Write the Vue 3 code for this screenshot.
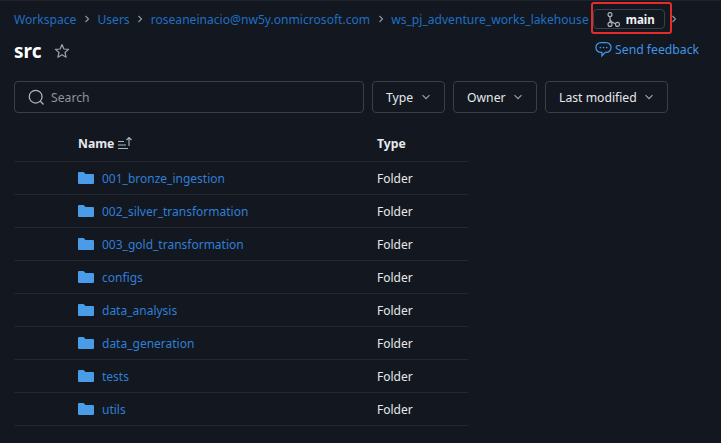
<script setup>
const folders = [
  "001_bronze_ingestion",
  "002_silver_transformation",
  "003_gold_transformation",
  "configs",
  "data_analysis",
  "data_generation",
  "tests",
  "utils",
];
const crumbs = ["Workspace", "Users", "roseaneinacio@nw5y.onmicrosoft.com", "ws_pj_adventure_works_lakehouse"];
const filters = [
  { label: "Type", width: "73px" },
  { label: "Owner", width: "84px" },
  { label: "Last modified", width: "123px" },
];
</script>

<template>
  <main class="page">
    <!-- breadcrumb row -->
    <nav class="crumbs">
      <template v-for="c in crumbs" :key="c">
        <a class="crumb">{{ c }}</a>
        <svg v-if="c !== crumbs[3]" class="sep" viewBox="0 0 8 10"><path d="M2.5 2 5.5 5 2.5 8" /></svg>
      </template>
      <div class="branch">
        <svg class="branch-icon" viewBox="0 0 13 15">
          <circle cx="3" cy="2.6" r="2" />
          <circle cx="3" cy="12.4" r="2" />
          <circle cx="10.5" cy="12.4" r="2" />
          <path d="M3 4.6v5.8M3 6c0 2.5 1.5 4.5 5.5 5.6" />
        </svg>
        <span>main</span>
        <div class="highlight"></div>
      </div>
      <svg class="sep last" viewBox="0 0 8 10"><path d="M2.5 2 5.5 5 2.5 8" /></svg>
    </nav>

    <!-- title row -->
    <header class="title-row">
      <h1>src</h1>
      <svg class="star" viewBox="0 0 16 16"><path d="M8 1.6 9.9 6l4.7.4-3.6 3.1 1.1 4.7L8 11.7l-4.1 2.5L5 9.5 1.4 6.4 6.1 6Z" /></svg>
      <a class="feedback">
        <svg viewBox="0 0 16 16"><path d="M5.5 1.5h5a4.6 4.6 0 0 1 0 9.2H9.6L6.5 14v-3.3h-1a4.6 4.6 0 0 1 0-9.2Z" /><g class="dots"><circle cx="5" cy="6.1" r=".8" /><circle cx="8" cy="6.1" r=".8" /><circle cx="11" cy="6.1" r=".8" /></g></svg>
        Send feedback
      </a>
    </header>

    <!-- search and filters -->
    <div class="toolbar">
      <label class="search">
        <svg viewBox="0 0 16 16"><circle cx="7.2" cy="7.2" r="6" /><path d="m11.6 11.6 3 3" /></svg>
        <span>Search</span>
      </label>
      <button v-for="f in filters" :key="f.label" class="filter" :style="{ width: f.width }">
        {{ f.label }}
        <svg viewBox="0 0 10 10"><path d="M1.5 3.2 5 6.7 8.5 3.2" /></svg>
      </button>
    </div>

    <table class="files">
      <thead>
        <tr>
          <th class="name-col">
            <span class="name-head">Name
              <svg viewBox="0 0 14 12"><path d="M0 4.5h6M0 8h8M0 11.5h10M11 9V.5M8.5 3 11 .5 13.5 3" /></svg>
            </span>
          </th>
          <th>Type</th>
        </tr>
      </thead>
      <tbody>
        <tr v-for="f in folders" :key="f">
          <td class="name-col">
            <div class="name-cell">
              <svg class="folder" viewBox="0 0 16 12"><path d="M0 1a1 1 0 0 1 1-1h4.6l2 2H15a1 1 0 0 1 1 1v8a1 1 0 0 1-1 1H1a1 1 0 0 1-1-1Z" /></svg>
              <a>{{ f }}</a>
            </div>
          </td>
          <td class="type">Folder</td>
        </tr>
      </tbody>
    </table>
  </main>
</template>

<style>
body { background: #13171f; }
</style>

<style scoped>
.page {
  width: 721px;
  height: 443px;
  box-sizing: border-box;
  overflow: hidden;
  padding: 1px 22px 0 14px;
  border-top: 1px solid #1f242c;
  background: #13171f;
  color: #e6e9ed;
  font-family: "Noto Sans", "Open Sans", sans-serif;
  font-size: 12.2px;
}

.crumbs {
  display: flex;
  align-items: center;
  height: 34px;
  white-space: nowrap;
}
.crumb { color: #1f6fc4; font-size: 12.1px; }
.sep { width: 8px; height: 10px; margin: 0 6.5px; flex: none; }
.sep path { fill: none; stroke: #8b949e; stroke-width: 1.2; }
.sep.last { margin: 0 0 0 5px; }

.branch {
  position: relative;
  display: flex;
  align-items: center;
  gap: 6px;
  width: 72px;
  height: 20px;
  margin-left: 4px;
  box-sizing: border-box;
  padding-left: 13px;
  border: 1px solid #3a4048;
  border-radius: 4px;
  color: #f2f4f6;
  font-size: 11.5px;
  font-weight: 700;
}
.branch-icon { width: 13px; height: 15px; flex: none; }
.branch-icon circle, .branch-icon path { fill: none; stroke: #aeb6bf; stroke-width: 1.1; }
.highlight {
  position: absolute;
  left: -3px;
  right: -8px;
  top: -8px;
  bottom: -6px;
  border: 2px solid #e52b2b;
  border-radius: 3px;
}

.title-row {
  display: flex;
  align-items: center;
  height: 30px;
}
h1 {
  margin: 0;
  font-size: 19px;
  font-weight: 700;
  color: #fff;
}
.star { width: 16px; height: 16px; margin-left: 13px; }
.star path { fill: none; stroke: #9aa3ad; stroke-width: 1.2; stroke-linejoin: round; }
.feedback {
  display: flex;
  align-items: center;
  gap: 3px;
  margin-left: auto;
  margin-top: -4px;
  color: #3f95e6;
  font-size: 12.2px;
}
.feedback svg { width: 17px; height: 17px; }
.feedback svg > path { fill: none; stroke: #3f95e6; stroke-width: 1.2; }
.dots circle { fill: #3f95e6; }

.toolbar {
  display: flex;
  gap: 8px;
  margin-top: 15px;
}
.search {
  display: flex;
  align-items: center;
  gap: 6px;
  width: 350px;
  height: 32px;
  box-sizing: border-box;
  padding-left: 13px;
  border: 1px solid #3a4048;
  border-radius: 4px;
  color: #8b949e;
  font-size: 12.2px;
}
.search svg { width: 17px; height: 17px; }
.search circle, .search path { fill: none; stroke: #aeb6bf; stroke-width: 1.2; }
.filter {
  display: flex;
  align-items: center;
  justify-content: space-between;
  height: 32px;
  box-sizing: border-box;
  padding: 0 13px;
  border: 1px solid #3a4048;
  border-radius: 4px;
  background: transparent;
  color: #e6e9ed;
  font: inherit;
  font-size: 12.2px;
}
.filter svg { width: 10px; height: 10px; }
.filter path { fill: none; stroke: #9aa3ad; stroke-width: 1.2; }

.files {
  width: 454px;
  margin-top: 14px;
  border-collapse: collapse;
  table-layout: fixed;
}
.files th, .files td {
  padding: 0;
  text-align: left;
  border-bottom: 1px solid #23272f;
}
.files th {
  height: 34px;
  padding-bottom: 1px;
  box-sizing: border-box;
  font-size: 12.2px;
  font-weight: 700;
  color: #e6e9ed;
}
.files td {
  height: 33px;
  padding-top: 2px;
  box-sizing: border-box;
  font-size: 12px;
}
.name-col { width: 299px; padding-left: 64px !important; }
.files th.name-col { width: 363px; }
.name-head { display: inline-flex; align-items: center; gap: 4px; }
.name-head svg { width: 14px; height: 12px; }
.name-head path { fill: none; stroke: #aeb6bf; stroke-width: 1.1; }
.name-cell { display: flex; align-items: center; gap: 8px; }
.folder { width: 16px; height: 12px; flex: none; margin-top: -2px; }
.folder path { fill: #4a9be8; }
.name-cell a { color: #2f7fd6; }
.type { color: #e6e9ed; }
</style>
